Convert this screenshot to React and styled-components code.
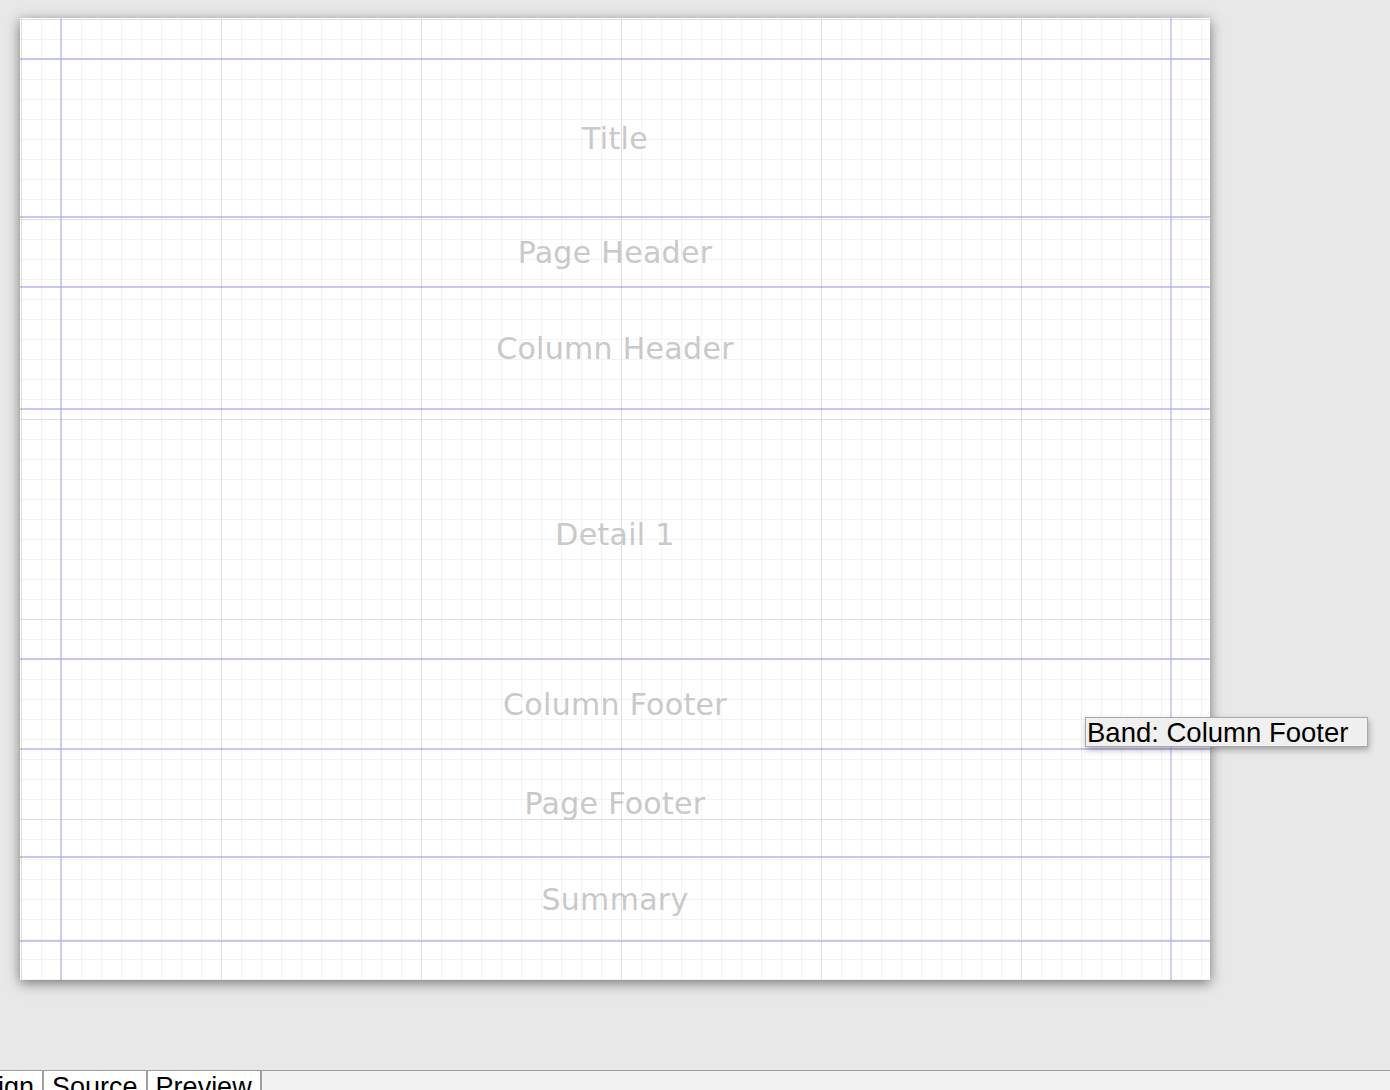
import React from 'react';
import styled, { createGlobalStyle } from 'styled-components';

const GlobalStyle = createGlobalStyle`
    html, body {
        margin: 0;
        padding: 0;
        background: #e8e8e8;
        overflow: hidden;
    }
    body {
        font-family: "Liberation Sans", Arial, sans-serif;
    }
`;

const bands = [
    { name: 'Title', height: 158 },
    { name: 'Page Header', height: 70 },
    { name: 'Column Header', height: 122 },
    { name: 'Detail 1', height: 250 },
    { name: 'Column Footer', height: 90 },
    { name: 'Page Footer', height: 108 },
    { name: 'Summary', height: 86 },
];

const tabs = ['Design', 'Source', 'Preview'];

const App = () => {
    return (
        <Window>
            <GlobalStyle />
            <Workspace>
                <Page>
                    <Bands>
                        {bands.map((band, i) => (
                            <Band key={band.name} $height={band.height} $last={i === bands.length - 1}>
                                <BandLabel>{band.name}</BandLabel>
                            </Band>
                        ))}
                    </Bands>
                </Page>
                <Tooltip>Band: Column Footer</Tooltip>
            </Workspace>
            <TabStrip>
                {tabs.map((tab, i) => (
                    <Tab key={tab} $first={i === 0}>
                        {tab}
                    </Tab>
                ))}
            </TabStrip>
        </Window>
    );
};

export default App;

const Window = styled.div`
    width: 1390px;
    height: 1090px;
    display: flex;
    flex-direction: column;
    overflow: hidden;
`;

const Workspace = styled.div`
    position: relative;
    height: 1070px;
    padding: 18px 0 0 20px;
    box-sizing: border-box;
    flex-shrink: 0;
`;

const Page = styled.div`
    width: 1190px;
    height: 962px;
    background-color: #ffffff;
    box-shadow: 0 3px 12px rgba(0, 0, 0, 0.5);
    background-image:
        linear-gradient(to right, transparent 40px, rgba(170, 170, 240, 0.55) 40px, rgba(170, 170, 240, 0.55) 42px, transparent 42px),
        linear-gradient(to right, transparent 1150px, rgba(170, 170, 240, 0.55) 1150px, rgba(170, 170, 240, 0.55) 1152px, transparent 1152px),
        linear-gradient(to right, #dedede 1px, transparent 1px),
        linear-gradient(to bottom, #dedede 1px, transparent 1px),
        linear-gradient(to right, #f3f3f3 1px, transparent 1px),
        linear-gradient(to bottom, #f3f3f3 1px, transparent 1px);
    background-size:
        100% 100%,
        100% 100%,
        200px 200px,
        200px 200px,
        20px 20px,
        20px 20px;
    background-position:
        0 0,
        0 0,
        1px 1px,
        1px 1px,
        1px 1px,
        1px 1px;
    background-repeat: no-repeat, no-repeat, repeat, repeat, repeat, repeat;
`;

const Bands = styled.div`
    padding-top: 40px;
    display: flex;
    flex-direction: column;
`;

const Band = styled.div`
    height: ${p => p.$height}px;
    box-sizing: border-box;
    border-top: 2px solid rgba(165, 165, 240, 0.62);
    border-bottom: ${p => (p.$last ? '2px solid rgba(165, 165, 240, 0.62)' : 'none')};
    display: flex;
    align-items: center;
    justify-content: center;
`;

const BandLabel = styled.span`
    font-family: "DejaVu Sans", "Noto Sans", sans-serif;
    font-size: 30px;
    color: #c9c9c9;
    letter-spacing: 0.3px;
`;

const Tooltip = styled.div`
    position: absolute;
    left: 1085px;
    top: 717px;
    width: 283px;
    height: 30px;
    box-sizing: border-box;
    padding-left: 1px;
    background: #f0f0f0;
    border: 1px solid #a9a9a9;
    box-shadow: 1px 3px 6px rgba(0, 0, 0, 0.3);
    font-family: "Liberation Sans", Arial, sans-serif;
    font-size: 27.5px;
    line-height: 30px;
    color: #000000;
    white-space: nowrap;
`;

const TabStrip = styled.div`
    display: flex;
    height: 20px;
    border-top: 1px solid #9c9c9c;
    background: #f2f2f2;
`;

const Tab = styled.div`
    margin-left: ${p => (p.$first ? '-58px' : '0')};
    padding: 0 8px;
    height: 30px;
    background: #ffffff;
    border-right: 2px solid #a0a0a0;
    font-family: "Liberation Sans", Arial, sans-serif;
    font-size: 27px;
    line-height: 32px;
    color: #000000;
    white-space: nowrap;
`;
